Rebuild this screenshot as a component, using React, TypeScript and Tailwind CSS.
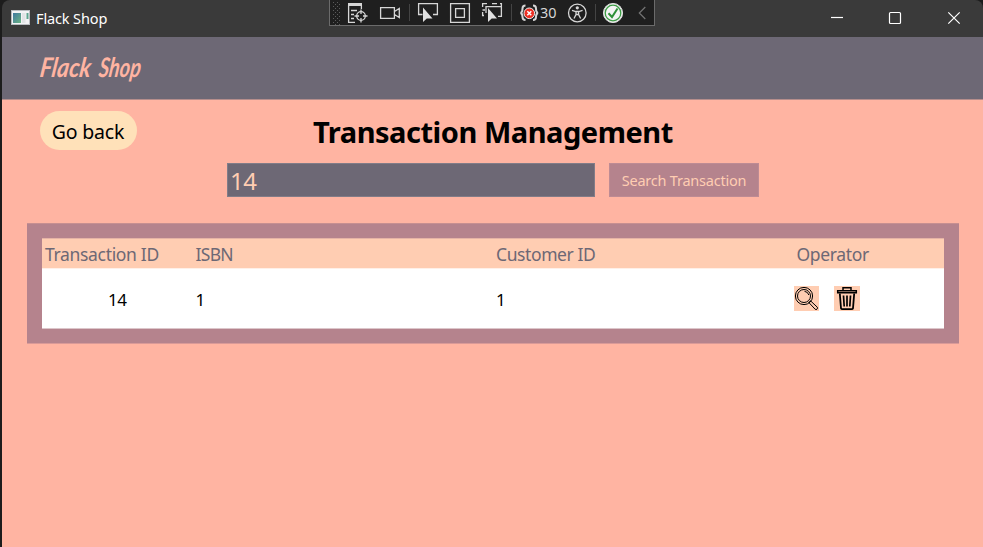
import React from "react";

function AppIcon() {
  return (
    <svg width="19" height="16" viewBox="0 0 19 16" className="block">
      <defs>
        <linearGradient id="pane" x1="0" y1="0" x2="1" y2="1">
          <stop offset="0" stopColor="#3f78a0" />
          <stop offset="1" stopColor="#6cb584" />
        </linearGradient>
      </defs>
      <rect x="0.5" y="0.5" width="18" height="14" fill="#f3f3f5" stroke="#b9bcc0" />
      <rect x="2" y="3" width="8" height="10" fill="url(#pane)" />
      <rect x="11" y="3" width="3.5" height="10" fill="#e2e4e6" />
      <rect x="15.5" y="3" width="2" height="6" fill="#5ea58f" />
    </svg>
  );
}

function DebugToolbar() {
  return (
    <div className="absolute left-[329px] top-0 h-[26px] w-[326px] border border-t-0 border-[#6b6b6b] bg-[#1f1f1f]">
      <svg width="324" height="25" viewBox="330 0 324 25" className="block" fill="none" stroke="#d6d6d6" strokeWidth="1.3">
        <g fill="#5c5c5c" stroke="none">
          {[2, 6, 10, 14, 18, 22].map((y) => (
            <React.Fragment key={y}>
              <rect x="333" y={y} width="1" height="1" />
              <rect x="337" y={y} width="1" height="1" />
              <rect x="335" y={y + 2} width="1" height="1" />
              <rect x="339" y={y + 2} width="1" height="1" />
            </React.Fragment>
          ))}
        </g>
        <rect x="348" y="3" width="14" height="3" fill="#d6d6d6" stroke="none" />
        <path d="M348.6 5V22.4H355M361.4 5V9M351 10.5H357M351 14.5H354M351 18.5H354" />
        <circle cx="361" cy="16" r="4.3" />
        <path d="M361 9.5V14M361 18V22.5M354.5 16H359M363 16H367.5" />
        <path d="M380.6 7.6H394.4V18.4H380.6ZM394.5 11.5L399.3 8.5V17.5L394.5 14.5" />
        <path d="M409.5 4V21M511.5 4V21M595.5 4V21" stroke="#444" strokeWidth="1" />
        <path d="M422.5 14.5H418.6V3.6H437.4V14.5H433" />
        <path d="M423 7.5V22L426.8 18.5H432.5Z" fill="#e0e0e0" stroke="none" />
        <path d="M450.6 3.6H469.4V22.4H450.6ZM455.6 8.6H464.4V17.4H455.6Z" />
        <path d="M484 15.5H482.6V12M482.6 7V3.6H487M492 3.6H497M500 3.6H501.4V7M486 13V6.6H501.4V16.4H498M485 10H482.5" />
        <path d="M488 8V22L491.7 18.5H497Z" fill="#e0e0e0" stroke="none" />
        <path d="M525.5 5.5Q522.5 5.5 522.5 8.5Q522.5 12.5 520.5 13Q522.5 13.5 522.5 17Q522.5 20 525.5 20M533 5.5Q536 5.5 536 8.5Q536 12.5 538 13Q536 13.5 536 17Q536 20 533 20" strokeWidth="2" />
        <circle cx="529.3" cy="13.3" r="5.3" fill="#ed2f22" stroke="#f1f1f1" strokeWidth="1" />
        <path d="M527.3 11.3L531.3 15.3M531.3 11.3L527.3 15.3" stroke="#fff" strokeWidth="1.5" />
        <text x="540" y="18" textLength="16.5" lengthAdjust="spacingAndGlyphs" fill="#d6d6d6" stroke="none" fontFamily="Noto Sans, sans-serif" fontSize="15">30</text>
        <circle cx="577.3" cy="13" r="8.8" />
        <circle cx="577.3" cy="7.8" r="1.6" fill="#d6d6d6" stroke="none" />
        <path d="M572 10.3L575.8 11.5H578.8L582.6 10.3M576 11.5V14.5L574 18.5M578.6 11.5V14.5L580.6 18.5M576 14.5H578.6" />
        <circle cx="613" cy="13" r="9.6" fill="#f4f4f4" stroke="#dedede" strokeWidth="1" />
        <circle cx="613" cy="13" r="7.8" stroke="#3c9c45" strokeWidth="1.3" />
        <path d="M608.5 13.2L612 17L617.5 8.5" stroke="#2f9038" strokeWidth="2" />
        <path d="M645.3 7L639.3 13L645.3 19" stroke="#747474" strokeWidth="1.2" />
      </svg>
    </div>
  );
}

function TitleBar() {
  return (
    <header className="flex h-[37px] items-center justify-between rounded-t-lg bg-[#3a3a3a] pl-[9px]">
      <div className="flex items-center gap-[6px] pb-[2px]">
        <AppIcon />
        <span className="pt-px text-[14.5px] leading-5 tracking-[-0.13px] text-white">Flack Shop</span>
      </div>
      <svg width="152" height="37" viewBox="831 0 152 37" fill="none" stroke="#fff" strokeWidth="1.2">
        <path d="M831 17.5H843" />
        <rect x="889.5" y="12.5" width="11" height="11" rx="1" />
        <path d="M948.3 12.3L959.7 23.7M959.7 12.3L948.3 23.7" />
      </svg>
    </header>
  );
}

function Brand() {
  return (
    <div className="flex h-[63px] items-center border-b border-[#b68e8c] bg-[#6d6875] pl-[36px]">
      <svg width="112" height="40" viewBox="38 48 112 40" fill="#ffb4a2" fontFamily="Lato, sans-serif" fontStyle="italic" fontWeight="700">
        <g transform="translate(0 77) skewX(-8) translate(0 -77)">
          <text x="39" y="77" fontSize="27" textLength="51" lengthAdjust="spacingAndGlyphs">Flack</text>
          <text x="98" y="77" fontSize="27" textLength="42" lengthAdjust="spacingAndGlyphs">Shop</text>
        </g>
      </svg>
    </div>
  );
}

function MagnifierIcon() {
  return (
    <svg width="25" height="25" viewBox="0 0 25 25" fill="none" stroke="#000" strokeWidth="1">
      <circle cx="10" cy="10" r="8.6" />
      <circle cx="10" cy="10" r="6.5" />
      <path d="M10.5 5.3Q14 5.8 14.8 9" />
      <path d="M14.8 16.5L16.5 14.8L23.3 21.2Q24 22.2 23 23.2Q22 24 21.1 23.2Z" />
    </svg>
  );
}

function TrashIcon() {
  return (
    <svg width="26" height="25" viewBox="0 0 26 25" fill="none" stroke="#000" strokeWidth="1.5">
      <path d="M9 4V1.7H17V4" />
      <path d="M3.7 4.7H22.3V6.8H3.7Z" />
      <path d="M5.8 7.5L7 22.2Q7.2 23.2 8.5 23.2H17.5Q18.8 23.2 19 22.2L20.2 7.5" strokeWidth="1.8" />
      <path d="M9.5 9.5L10.2 20.5M13 9.5V20.5M16.5 9.5L15.8 20.5" strokeWidth="1.7" />
    </svg>
  );
}

const columns = "grid grid-cols-[150.5px_300.5px_300.5px_150.5px] items-center";

function TransactionTable() {
  return (
    <section className="ml-[25px] mt-[26px] h-[121px] w-[932px] border-y border-t-[#c68f91] border-b-[#d99a98] bg-[#b5838d] px-[15px] pt-[14px]">
      <div className={`${columns} h-[30px] border-t border-[#e5b4a6] bg-[#ffcdb2] pt-[2px] text-[17.5px] text-[#6d6875]`}>
        <span className="pl-[3px] tracking-[-0.33px]">Transaction ID</span>
        <span className="pl-[3px] tracking-[-0.7px]">ISBN</span>
        <span className="pl-[3px] tracking-[-0.4px]">Customer ID</span>
        <span className="pl-[3px] tracking-[-0.33px]">Operator</span>
      </div>
      <div className={`${columns} h-[61px] border-y border-t-[#fff0e8] border-b-[#dcc6ca] bg-white text-[17px] text-black`}>
        <span className="pt-[3px] text-center tracking-[-0.4px]">14</span>
        <span className="pl-[3px] pt-[3px]">1</span>
        <span className="pl-[3px] pt-[3px]">1</span>
        <div className="flex gap-[15px]">
          <button className="h-[25px] w-[25px] bg-[#ffcdb2]"><MagnifierIcon /></button>
          <button className="h-[25px] w-[26px] bg-[#ffcdb2]"><TrashIcon /></button>
        </div>
      </div>
    </section>
  );
}

export default function App() {
  return (
    <div className="relative h-[547px] w-[983px] overflow-hidden bg-[#1c1c1c] pl-[2px] font-['Noto_Sans',sans-serif]">
      <TitleBar />
      <DebugToolbar />
      <Brand />
      <main className="flex h-[447px] flex-col bg-[#ffb4a2]">
        <div className="flex h-[63px] items-start pl-[38px] pt-[11px]">
          <button className="h-[39px] w-[97px] rounded-[22px] bg-[#ffe1b9] pr-px pt-[2px] text-[19.5px] tracking-[-0.2px] text-black">Go back</button>
          <h1 className="ml-[176px] whitespace-nowrap text-[29px] font-bold leading-[42px] tracking-[-0.47px] text-black">Transaction Management</h1>
        </div>
        <div className="flex gap-[14px] pl-[225px]">
          <div className="flex h-[34px] w-[368px] items-center border border-[#817c88] bg-[#6d6875] pl-[2px] pt-[2px] text-[24px] tracking-[-0.5px] text-[#ffcdb2]">14</div>
          <button className="h-[34px] w-[150px] border border-[#bd8b94] bg-[#b5838d] pt-[2px] text-[14.5px] tracking-[-0.22px] text-[#ffcdb2]">Search Transaction</button>
        </div>
        <TransactionTable />
      </main>
    </div>
  );
}
